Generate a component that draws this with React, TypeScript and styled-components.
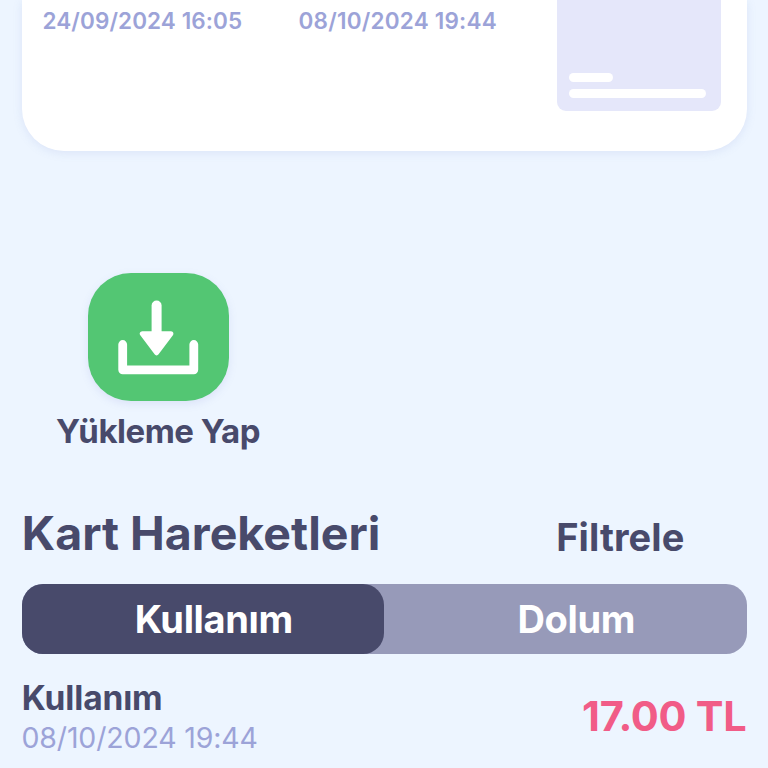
import React from 'react';
import styled, { createGlobalStyle } from 'styled-components';

const ink = '#484a6b';
const muted = '#9ca3d8';

const GlobalStyle = createGlobalStyle`
  *, *::before, *::after { box-sizing: border-box; }
  body {
    margin: 0;
    background: #edf5ff;
    color: ${ink};
    font-family: Inter, "Liberation Sans", sans-serif;
    overflow: hidden;
  }
`;

const Screen = styled.main`
  display: flex;
  flex-direction: column;
  height: 768px;
  overflow: hidden;
  padding: 0 21.5px;
  white-space: nowrap;
`;

const Card = styled.section`
  display: flex;
  flex: none;
  justify-content: space-between;
  height: 151px;
  padding: 0 25.5px 0 21px;
  border-radius: 0 0 42px 42px;
  background: #fff;
  box-shadow: 0 2px 10px rgba(120, 140, 210, 0.15);
`;

const CardDates = styled.div`
  display: grid;
  grid-template-columns: 256px auto;
  align-items: start;
  padding-top: 8px;
`;

const CardDate = styled.time<{ $tracking: number }>`
  color: ${muted};
  font-size: 22.5px;
  font-weight: 600;
  line-height: 26px;
  letter-spacing: ${(p) => p.$tracking}px;
`;

const Preview = styled.div`
  display: flex;
  flex-direction: column;
  justify-content: flex-end;
  gap: 7px;
  width: 164.5px;
  height: 110.5px;
  padding: 0 12px 12.5px;
  border-radius: 0 0 9px 9px;
  background: #e5e7fa;
`;

const PreviewLine = styled.div<{ $width: number }>`
  width: ${(p) => p.$width}px;
  height: 9px;
  border-radius: 4.5px;
  background: #fff;
`;

const Action = styled.button`
  display: flex;
  flex: none;
  flex-direction: column;
  align-items: center;
  align-self: flex-start;
  gap: 10px;
  width: 273px;
  margin: 121.5px 0 0;
  padding: 0;
  border: 0;
  background: none;
  color: inherit;
  font: inherit;
`;

const ActionTile = styled.span`
  display: flex;
  width: 141px;
  height: 128px;
  border-radius: 43px;
  background: #53c673;
  box-shadow: 0 3px 9px rgba(120, 130, 210, 0.15);
`;

const ActionLabel = styled.span`
  font-size: 33px;
  font-weight: 650;
  line-height: 40px;
  letter-spacing: -0.5px;
`;

const SectionHeader = styled.header`
  display: flex;
  flex: none;
  align-items: flex-start;
  justify-content: space-between;
  margin-top: 54.5px;
  padding-right: 62px;
`;

const Title = styled.h1`
  margin: 0 0 0 0.3px;
  font-size: 46.5px;
  font-weight: 650;
  line-height: 56px;
  letter-spacing: 0;
`;

const Filter = styled.button`
  margin: 4px 0 0;
  padding: 0;
  border: 0;
  background: none;
  color: inherit;
  font: 650 38px/56px Inter, "Liberation Sans", sans-serif;
  letter-spacing: 0.1px;
`;

const Tabs = styled.div`
  display: grid;
  flex: none;
  grid-template-columns: 1fr 1fr;
  height: 70.5px;
  margin-top: 18.5px;
  border-radius: 21px;
  background: #979ab9;
`;

const Tab = styled.button<{ $active?: boolean }>`
  padding: 0 0 0 22px;
  border: 0;
  border-radius: 21px;
  background: ${(p) => (p.$active ? ink : 'transparent')};
  color: #fff;
  font: 650 38px/70px Inter, "Liberation Sans", sans-serif;
  letter-spacing: -0.35px;
`;

const Entry = styled.article`
  display: flex;
  flex: none;
  justify-content: space-between;
  margin-top: 23.5px;
`;

const EntryInfo = styled.div`
  display: flex;
  flex-direction: column;
  gap: 2px;
`;

const EntryName = styled.strong`
  margin-left: 0.3px;
  font-size: 33.5px;
  font-weight: 650;
  line-height: 40px;
  letter-spacing: -0.15px;
`;

const EntryDate = styled.time`
  color: ${muted};
  font-size: 28.5px;
  line-height: 36px;
  letter-spacing: -0.15px;
`;

const Amount = styled.span`
  padding-top: 13px;
  color: #f15c87;
  font-size: 41.5px;
  font-weight: 650;
  line-height: 50px;
  letter-spacing: -0.25px;
`;

const DownloadIcon = () => (
  <svg width="141" height="128" viewBox="0 0 141 128" fill="none" aria-hidden="true">
    <path d="M68.6 32.5V64" stroke="#fff" strokeWidth="10" strokeLinecap="round" />
    <path
      d="M54.3 60.8H82.9L68.6 79.8Z"
      fill="#fff"
      stroke="#fff"
      strokeWidth="5"
      strokeLinejoin="round"
    />
    <path
      d="M34.7 71.5V96.8H105.8V71.5"
      stroke="#fff"
      strokeWidth="8.8"
      strokeLinecap="round"
      strokeLinejoin="round"
    />
  </svg>
);

export default function App() {
  return (
    <>
      <GlobalStyle />
      <Screen>
        <Card>
          <CardDates>
            <CardDate $tracking={0.1}>24/09/2024 16:05</CardDate>
            <CardDate $tracking={0.22}>08/10/2024 19:44</CardDate>
          </CardDates>
          <Preview>
            <PreviewLine $width={44} />
            <PreviewLine $width={137} />
          </Preview>
        </Card>
        <Action>
          <ActionTile>
            <DownloadIcon />
          </ActionTile>
          <ActionLabel>Yükleme Yap</ActionLabel>
        </Action>
        <SectionHeader>
          <Title>Kart Hareketleri</Title>
          <Filter>Filtrele</Filter>
        </SectionHeader>
        <Tabs>
          <Tab $active>Kullanım</Tab>
          <Tab>Dolum</Tab>
        </Tabs>
        <Entry>
          <EntryInfo>
            <EntryName>Kullanım</EntryName>
            <EntryDate>08/10/2024 19:44</EntryDate>
          </EntryInfo>
          <Amount>17.00 TL</Amount>
        </Entry>
      </Screen>
    </>
  );
}
